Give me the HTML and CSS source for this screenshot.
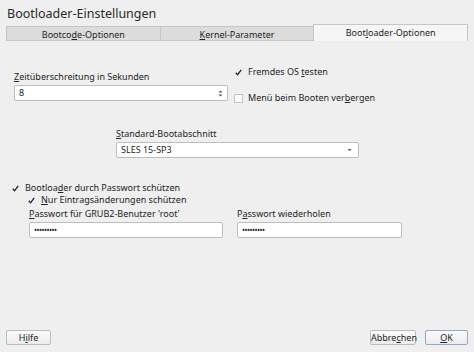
FILE: index.html
```html
<!DOCTYPE html>
<html lang="de">
<head>
    <meta charset="UTF-8">
    <title>Bootloader-Einstellungen</title>
    <link rel="stylesheet" href="styles.css">
</head>
<body>
    <div class="dialog">
        <!-- Titel -->
        <div class="title">Bootloader-Einstellungen</div>

        <!-- Reiter -->
        <div class="tabs">
            <div class="tab">Bootco<u>d</u>e-Optionen</div>
            <div class="tab"><u>K</u>ernel-Parameter</div>
            <div class="tab active">Boot<u>l</u>oader-Optionen</div>
        </div>

        <div class="panel">
            <!-- Zeitueberschreitung + Optionen -->
            <div class="row-top">
                <div class="field timeout">
                    <div class="label"><u>Z</u>eitüberschreitung in Sekunden</div>
                    <div class="spinbox">
                        <span>8</span>
                        <span class="spin-arrows">
                            <svg width="5" height="9" viewBox="0 0 5 9"><path d="M0.5 3.5 L2.5 1.5 L4.5 3.5 Z M0.5 5.5 L2.5 7.5 L4.5 5.5 Z" fill="#555"/></svg>
                        </span>
                    </div>
                </div>
                <div class="checks">
                    <div class="check checked"><span class="box"><svg width="9" height="9" viewBox="0 0 9 9"><path d="M1.8 4.8 L3.6 6.8 L7.2 1.8" fill="none" stroke="#222" stroke-width="1.3"/></svg></span><span>Fremdes OS <u>t</u>esten</span></div>
                    <div class="check"><span class="box"></span><span>Menü beim Booten ver<u>b</u>ergen</span></div>
                </div>
            </div>

            <!-- Standard-Bootabschnitt -->
            <div class="field section">
                <div class="label"><u>S</u>tandard-Bootabschnitt</div>
                <div class="combo">
                    <span>SLES 15-SP3</span>
                    <svg width="5" height="4" viewBox="0 0 5 4"><path d="M0.5 1 L2.5 3 L4.5 1 Z" fill="#555"/></svg>
                </div>
            </div>

            <!-- Passwort -->
            <div class="password">
                <div class="check checked"><span class="box"><svg width="9" height="9" viewBox="0 0 9 9"><path d="M1.8 4.8 L3.6 6.8 L7.2 1.8" fill="none" stroke="#222" stroke-width="1.3"/></svg></span><span>Bootloa<u>d</u>er durch Passwort schützen</span></div>
                <div class="check checked sub"><span class="box"><svg width="9" height="9" viewBox="0 0 9 9"><path d="M1.8 4.8 L3.6 6.8 L7.2 1.8" fill="none" stroke="#222" stroke-width="1.3"/></svg></span><span><u>N</u>ur Eintragsänderungen schützen</span></div>
                <div class="pw-row">
                    <div class="field pw1">
                        <div class="label"><u>P</u>asswort für GRUB2-Benutzer 'root'</div>
                        <div class="input">•••••••••</div>
                    </div>
                    <div class="field pw2">
                        <div class="label">P<u>a</u>sswort wiederholen</div>
                        <div class="input">•••••••••</div>
                    </div>
                </div>
            </div>
        </div>

        <!-- Schaltflaechen -->
        <div class="footer">
            <button class="btn help">H<u>i</u>lfe</button>
            <div class="spacer"></div>
            <button class="btn cancel">Abbre<u>c</u>hen</button>
            <button class="btn ok"><u>O</u>K</button>
        </div>
    </div>
</body>
</html>
```

FILE: styles.css
```css
body {
    margin: 0;
    background-color: #efefef;
    font-family: 'Noto Sans', 'DejaVu Sans', sans-serif;
    font-size: 9px;
    color: #232323;
}

u {
    text-decoration-thickness: 1px;
    text-underline-offset: 1px;
}

.dialog {
    width: 474px;
    height: 352px;
    display: flex;
    flex-direction: column;
    box-sizing: border-box;
    padding: 0 6px;
}

.title {
    font-size: 12.5px;
    height: 24px;
    line-height: 27px;
    padding-left: 1px;
    color: #2a2a2a;
}

/* Reiter */
.tabs {
    display: flex;
    align-items: flex-end;
    height: 17px;
}

.tab {
    flex: 1;
    height: 15px;
    line-height: 15px;
    text-align: center;
    background-color: #dcdcdc;
    border: 1px solid #c6c6c6;
    border-right: none;
    box-sizing: border-box;
}

.tab.active {
    height: 17px;
    line-height: 16px;
    background-color: #f6f6f6;
    border-right: 1px solid #c6c6c6;
    border-bottom: none;
}

.panel {
    flex: 1;
    padding: 0 8px;
}

.label {
    height: 12px;
    line-height: 12px;
    margin-bottom: 2px;
}

/* obere Zeile */
.row-top {
    display: flex;
    margin-top: 26px;
}

.timeout {
    width: 214px;
    margin-top: 4px;
}

.spinbox, .combo, .input {
    height: 16px;
    line-height: 14px;
    background-color: #fff;
    border: 1px solid #bdbdbd;
    border-radius: 2px;
    box-sizing: border-box;
    padding: 0 4px;
    display: flex;
    align-items: center;
    justify-content: space-between;
}

.spin-arrows {
    display: flex;
    align-items: center;
}

.checks {
    margin-left: 6px;
    margin-top: -1px;
    display: flex;
    flex-direction: column;
    gap: 14px;
}

.check {
    display: flex;
    align-items: center;
    height: 12px;
    line-height: 12px;
}

.box {
    width: 9px;
    height: 9px;
    margin-right: 5px;
    box-sizing: border-box;
    border: 1px solid #c4c4c4;
    background-color: #fafafa;
    display: flex;
}

.check.checked .box {
    border: none;
    background-color: transparent;
}

/* Standard-Bootabschnitt */
.section {
    width: 243px;
    margin: 24px 0 0 102px;
}

.combo {
    padding-right: 6px;
}

/* Passwort */
.password {
    margin-top: 24px;
    margin-left: -3px;
}

.password .sub {
    margin-left: 16px;
}

.pw-row {
    display: flex;
    margin-left: 18px;
    margin-top: 2px;
}

.pw1 {
    width: 194px;
}

.pw2 {
    width: 165px;
    margin-left: 14px;
}

.input {
    font-size: 8px;
    letter-spacing: -0.5px;
    justify-content: flex-start;
}

/* Schaltflaechen */
.footer {
    display: flex;
    align-items: center;
    height: 21px;
    margin-bottom: 4px;
}

.spacer {
    flex: 1;
}

.btn {
    font-family: 'Noto Sans', 'DejaVu Sans', sans-serif;
    font-size: 9px;
    height: 15px;
    padding: 0;
    background: linear-gradient(#fbfbfb, #ececec);
    border: 1px solid #bcbcbc;
    border-radius: 2px;
    color: #232323;
}

.help {
    width: 45px;
}

.cancel {
    width: 46px;
}

.ok {
    width: 43px;
    margin-left: 9px;
    border-color: #93a9c6;
}
```
